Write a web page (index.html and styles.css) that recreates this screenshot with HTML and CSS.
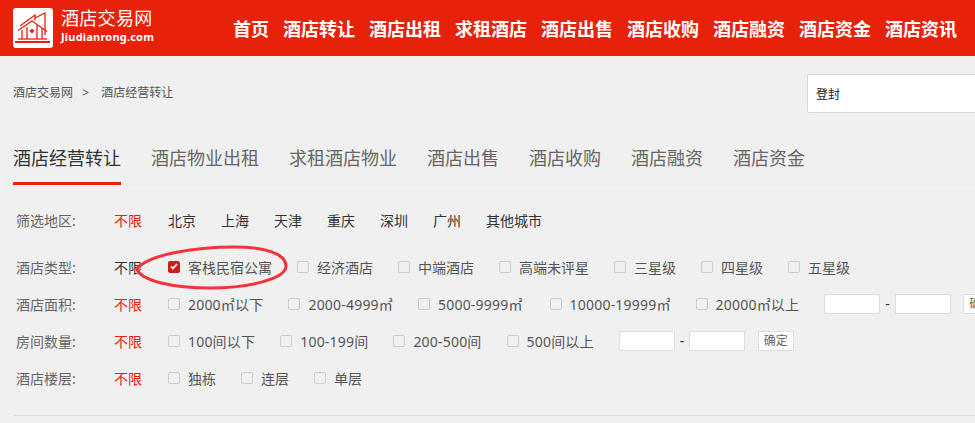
FILE: index.html
```html
<!DOCTYPE html>
<html lang="zh-CN">
<head>
    <meta charset="UTF-8">
    <meta name="viewport" content="width=device-width, initial-scale=1.0">
    <title>酒店经营转让</title>
    <link rel="stylesheet" href="styles.css">
</head>
<body>
    <div class="header">
        <a class="logo" href="#">
            <svg class="logo-icon" width="40" height="40" viewBox="0 0 40 40">
                <rect width="40" height="40" rx="3" fill="#fff"/>
                <g fill="none" stroke="#e8210b" stroke-width="1.300">
                    <path d="M5 22.500L19 13L34 23.500"/>
                    <path d="M7 18L22 7V12.500"/>
                    <path d="M22 10L32 5V27"/>
                    <path d="M9 22V31M14 19V31M24 17V31M29 20V31"/>
                    <path d="M5 31H34"/>
                </g>
                <path d="M19 20.500L21.500 23L19 25.500L16.500 23Z" fill="#e8210b"/>
                <rect x="2" y="33" width="35" height="2" fill="#e8210b"/>
            </svg>
            <div class="logo-text">
                <div class="logo-cn">酒店交易网</div>
                <div class="logo-en">Jiudianrong.com</div>
            </div>
        </a>
        <div class="nav">
            <a href="#">首页</a>
            <a href="#">酒店转让</a>
            <a href="#">酒店出租</a>
            <a href="#">求租酒店</a>
            <a href="#">酒店出售</a>
            <a href="#">酒店收购</a>
            <a href="#">酒店融资</a>
            <a href="#">酒店资金</a>
            <a href="#">酒店资讯</a>
        </div>
    </div>

    <div class="crumb-bar">
        <div class="crumb">
            <a href="#">酒店交易网</a>
            <span class="crumb-sep">&gt;</span>
            <a href="#">酒店经营转让</a>
        </div>
        <div class="search">登封</div>
    </div>

    <div class="tabs">
        <a class="tab active" href="#">酒店经营转让</a>
        <a class="tab" href="#">酒店物业出租</a>
        <a class="tab" href="#">求租酒店物业</a>
        <a class="tab" href="#">酒店出售</a>
        <a class="tab" href="#">酒店收购</a>
        <a class="tab" href="#">酒店融资</a>
        <a class="tab" href="#">酒店资金</a>
    </div>

    <div class="filters">
        <div class="row row-area">
            <span class="label">筛选地区:</span>
            <a class="any red" href="#">不限</a>
            <a class="city" href="#">北京</a>
            <a class="city" href="#">上海</a>
            <a class="city" href="#">天津</a>
            <a class="city" href="#">重庆</a>
            <a class="city" href="#">深圳</a>
            <a class="city" href="#">广州</a>
            <a class="city" href="#">其他城市</a>
        </div>
        <div class="row">
            <span class="label">酒店类型:</span>
            <a class="any" href="#">不限</a>
            <span class="opt"><i class="box checked"><svg width="8" height="7" viewBox="0 0 8 7"><path d="M1 3.500L3 5.500L7 1" fill="none" stroke="#fff" stroke-width="1.800"/></svg></i>客栈民宿公寓</span>
            <span class="opt"><i class="box"></i>经济酒店</span>
            <span class="opt"><i class="box"></i>中端酒店</span>
            <span class="opt"><i class="box"></i>高端未评星</span>
            <span class="opt"><i class="box"></i>三星级</span>
            <span class="opt"><i class="box"></i>四星级</span>
            <span class="opt"><i class="box"></i>五星级</span>
        </div>
        <div class="row row-num">
            <span class="label">酒店面积:</span>
            <a class="any red" href="#">不限</a>
            <span class="opt"><i class="box"></i>2000㎡以下</span>
            <span class="opt"><i class="box"></i>2000-4999㎡</span>
            <span class="opt opt-wide"><i class="box"></i>5000-9999㎡</span>
            <span class="opt"><i class="box"></i>10000-19999㎡</span>
            <span class="opt"><i class="box"></i>20000㎡以上</span>
            <span class="range"><input type="text"><b>-</b><input type="text"><button>确定</button></span>
        </div>
        <div class="row row-num">
            <span class="label">房间数量:</span>
            <a class="any red" href="#">不限</a>
            <span class="opt"><i class="box"></i>100间以下</span>
            <span class="opt"><i class="box"></i>100-199间</span>
            <span class="opt"><i class="box"></i>200-500间</span>
            <span class="opt"><i class="box"></i>500间以上</span>
            <span class="range"><input type="text"><b>-</b><input type="text"><button>确定</button></span>
        </div>
        <div class="row">
            <span class="label">酒店楼层:</span>
            <a class="any red" href="#">不限</a>
            <span class="opt"><i class="box"></i>独栋</span>
            <span class="opt"><i class="box"></i>连层</span>
            <span class="opt"><i class="box"></i>单层</span>
        </div>
    </div>

    <!-- 红圈标注 -->
    <svg class="circle-mark" width="160" height="50" viewBox="0 0 160 50">
        <path d="M4 26C14 12 60 4 102 4C130 4 153 10 153 23C153 36 115 45 78 45C40 45 8 38 4 26Z" fill="none" stroke="#f5333a" stroke-width="3"/>
    </svg>
</body>
</html>
```

FILE: styles.css
```css
* {
    box-sizing: border-box;
}
html, body {
    height: 423px;
    overflow: hidden;
}
body {
    position: relative;
    margin: 0;
    background: #f0f0f0;
    color: #333;
    font-family: "Noto Sans", "Noto Sans CJK SC", sans-serif;
    font-size: 14px;
}
a {
    color: inherit;
    text-decoration: none;
}
.header {
    display: flex;
    align-items: center;
    height: 56px;
    padding-left: 13px;
    background: #e8210b;
    color: #fff;
}
.logo {
    display: flex;
    width: 220px;
    flex: none;
}
.logo-icon {
    display: block;
    margin-right: 8px;
}
.logo-text {
    margin-top: -2px;
}
.logo-cn {
    font-size: 18px;
    line-height: 24px;
    letter-spacing: 0.3px;
}
.logo-en {
    font-size: 11px;
    line-height: 14px;
    font-weight: 700;
    letter-spacing: 0.2px;
}
.nav {
    display: flex;
    gap: 14px;
    font-size: 18px;
    font-weight: 700;
    white-space: nowrap;
}
.crumb-bar {
    display: flex;
    justify-content: space-between;
    align-items: center;
    height: 39px;
    margin-top: 18px;
    padding-left: 13px;
}
.crumb {
    margin-top: -3px;
    font-size: 12px;
    color: #555;
}
.crumb-sep {
    margin: 0 9px 0 6px;
}
.search {
    width: 168px;
    height: 39px;
    padding-left: 8px;
    background: #fff;
    border: 1px solid #d8d8d8;
    border-right: 0;
    border-radius: 2px 0 0 2px;
    font-size: 12px;
    line-height: 39px;
    color: #222;
}
.tabs {
    display: flex;
    gap: 30px;
    height: 72px;
    margin-left: 13px;
    padding-top: 29px;
    border-bottom: 1px solid #ebebeb;
    font-size: 18px;
    color: #666;
    white-space: nowrap;
}
.tab {
    height: 43px;
    line-height: 33px;
}
.tab.active {
    color: #333;
    border-bottom: 3px solid #e8210b;
}
.filters {
    width: 962px;
    height: 231px;
    margin-left: 13px;
    padding-top: 16px;
    border-bottom: 1px solid #ddd;
    white-space: nowrap;
}
.row {
    display: flex;
    align-items: center;
    height: 37px;
    width: 1000px;
}
.row-area {
    margin-bottom: 10px;
}
.row-num .opt {
    letter-spacing: 0.2px;
}
.row-num .opt-wide {
    margin-right: 27px;
}
.label {
    width: 101px;
    padding-left: 3px;
    color: #666;
}
.any {
    width: 54px;
    flex: none;
}
.red {
    color: #e8210b;
}
.city {
    margin-right: 25px;
}
.opt {
    display: flex;
    align-items: center;
    margin-right: 25px;
    color: #555;
}
.box {
    display: flex;
    align-items: center;
    justify-content: center;
    width: 12px;
    height: 12px;
    margin-right: 8px;
    border: 1px solid #ccc;
    border-radius: 2px;
}
.box.checked {
    background: #c9201a;
    border-color: #c9201a;
}
.range {
    display: flex;
    align-items: center;
}
.range input {
    width: 56px;
    height: 20px;
    padding: 0;
    background: #fff;
    border: 1px solid #ddd;
}
.range b {
    width: 14.500px;
    font-weight: 400;
    text-align: center;
}
.range button {
    width: 36px;
    height: 20px;
    margin-left: 12.500px;
    padding: 0;
    background: #fff;
    border: 1px solid #ddd;
    color: #666;
    font-family: inherit;
    font-size: 12px;
    line-height: 18px;
}
.circle-mark {
    position: absolute;
    left: 133px;
    top: 243px;
}
```
